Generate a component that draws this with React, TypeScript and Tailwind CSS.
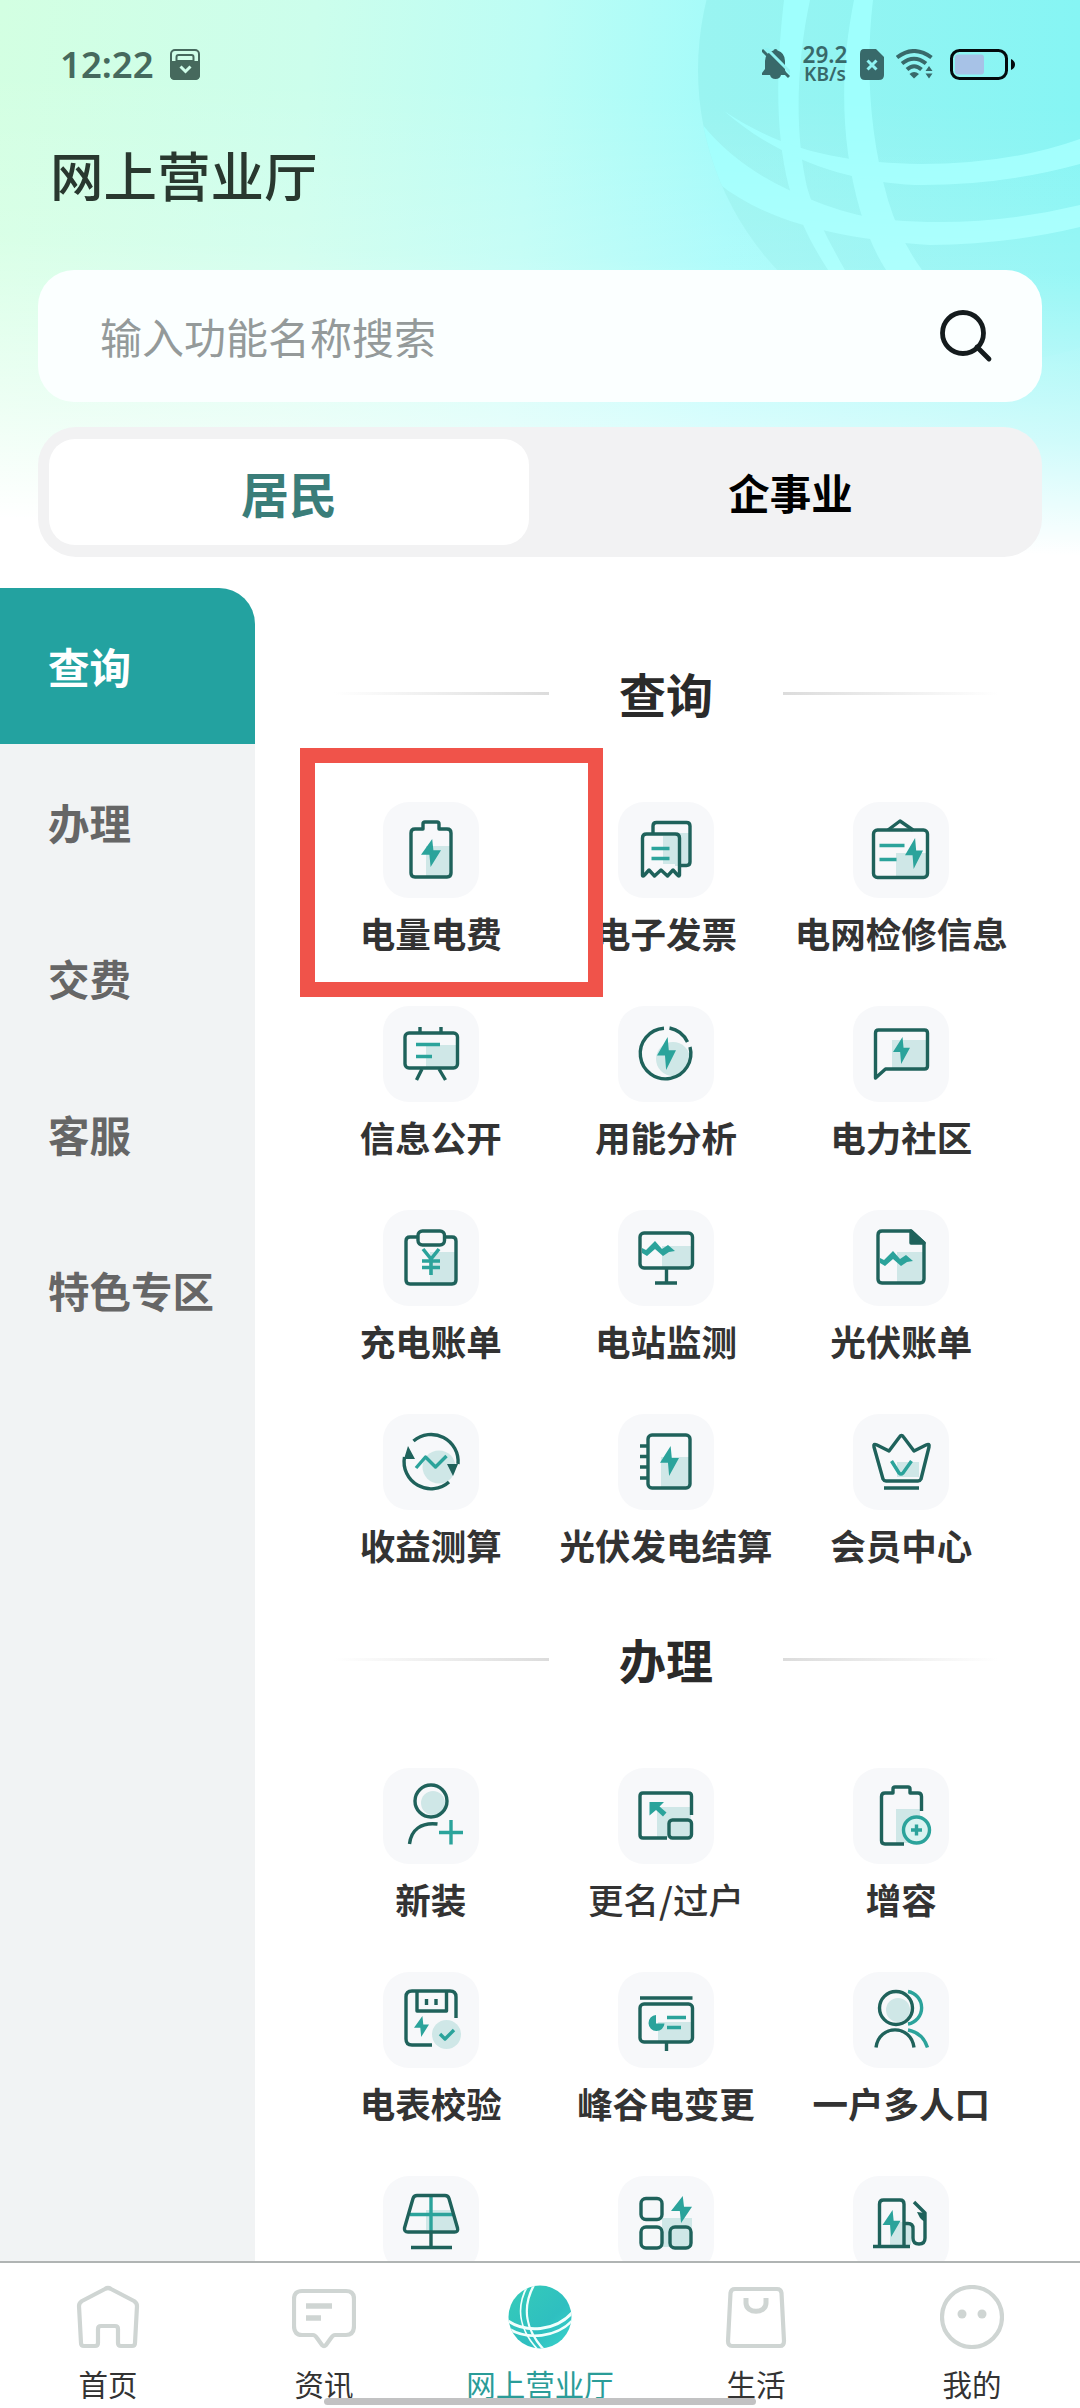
import type { ReactNode } from "react";

const DARK = "#1f625b";
const TEAL = "#2ba39b";
const PALE = "#cfe7e7";

function Bolt({ x, y, w, h }: { x: number; y: number; w: number; h: number }) {
  return (
    <path
      transform={`translate(${x} ${y}) scale(${w} ${h})`}
      d="M.56 0L0 .56H.42L.48 1L1 .4H.62Z"
      fill={TEAL}
      stroke="none"
    />
  );
}

const wave = "M0 7l4 2 9-9 7 8 6-4 7 6-6 1-6 4-8-7-8 7-5-3z";

const queryItems: { label?: string; icon: ReactNode; light?: boolean }[] = [
  {
    label: "电量电费",
    icon: (
      <>
        <path d="M43 44h25v31H43z" fill={PALE} stroke="none" />
        <path d="M32 27h8v-5q0-2 2-2h12q2 0 2 2v5h8q4 0 4 4v40q0 4-4 4H32q-4 0-4-4V31q0-4 4-4z" />
        <Bolt x={38} y={37} w={20} h={28} />
      </>
    ),
  },
  {
    label: "电子发票",
    icon: (
      <>
        <path d="M57 31h15v33H57zM45 34h16v28H45z" fill={PALE} stroke="none" />
        <path d="M35 32v-8q0-3.500 3.500-3.500h30q3.500 0 3.500 3.500v36q0 3.500-3.500 3.500H61" />
        <path d="M24.500 73V36q0-4 4-4h29q4 0 4 4v37q-.5 2-2 0l-4.500-5-5.500 6-6.500-6-6.500 6-5.500-6-4.500 5q-2 2-2 0z" />
        <path d="M33.500 46.500h18M33.500 56.500h18" stroke={TEAL} />
      </>
    ),
  },
  {
    label: "电网检修信息",
    icon: (
      <>
        <path d="M43 51h32v24H43z" fill={PALE} stroke="none" />
        <rect x="20.500" y="28" width="54" height="47.500" rx="4" />
        <path d="M35 28l12-9 13 9" />
        <path d="M26.500 43.500h25M26.500 57.500h17" stroke={TEAL} />
        <Bolt x={52} y={36} w={18} h={31} />
      </>
    ),
  },
  {
    label: "信息公开",
    icon: (
      <>
        <path d="M43 39h31v23H43z" fill={PALE} stroke="none" />
        <rect x="22" y="27" width="52.500" height="35" rx="4" />
        <path d="M37 21v6M58 21v6M39 63l-5.500 11M56 63l6.500 11" />
        <path d="M33 38.500h24M33 50.500h16" stroke={TEAL} />
      </>
    ),
  },
  {
    label: "用能分析",
    icon: (
      <>
        <circle cx="55" cy="53" r="17" fill={PALE} stroke="none" />
        <path d="M51.500 22A25.300 25.300 0 0 1 69.500 36M72 41A25.300 25.300 0 1 1 46 22.300" />
        <Bolt x={39} y={31} w={19} h={33} />
      </>
    ),
  },
  {
    label: "电力社区",
    icon: (
      <>
        <path d="M39 34h34v28H39z" fill={PALE} stroke="none" />
        <path d="M22.500 72V27q0-3 3-3h46q3 0 3 3v33q0 3-3 3H32.500z" />
        <Bolt x={40} y={31} w={17} h={27} />
      </>
    ),
  },
  {
    label: "充电账单",
    icon: (
      <>
        <path d="M47 42h25v31H47z" fill={PALE} stroke="none" />
        <path d="M35 27h-8q-4 0-4 4v39q0 4 4 4h42q4 0 4-4V31q0-4-4-4h-8" />
        <rect x="35" y="21" width="26.500" height="14" rx="4.500" />
        <path d="M40 39l8 10 8-10M48 49v16M39 51h18M39 57.500h18" stroke={TEAL} strokeWidth="3.600" />
      </>
    ),
  },
  {
    label: "电站监测",
    icon: (
      <>
        <path d="M44 36h30v21H44z" fill={PALE} stroke="none" />
        <rect x="22" y="23" width="52.500" height="35" rx="4" />
        <path d="M48.500 58v15M37 73h22" />
        <path d={wave} transform="translate(24 31)" fill={TEAL} stroke="none" />
      </>
    ),
  },
  {
    label: "光伏账单",
    icon: (
      <>
        <path d="M44 42h26v31H44z" fill={PALE} stroke="none" />
        <path d="M58 21H29q-4 0-4 4v44q0 4 4 4h38q4 0 4-4V33z" />
        <path d="M58 21v12h13z" fill={DARK} />
        <path d={wave} transform="translate(27 41)" fill={TEAL} stroke="none" />
      </>
    ),
  },
  {
    label: "收益测算",
    icon: (
      <>
        <circle cx="56" cy="53" r="16.500" fill={PALE} stroke="none" />
        <path d="M30.500 27A27 27 0 0 1 75 50M21.500 43A27 27 0 0 0 66 68" />
        <path d="M25 32l-4 13h11zM64 50h11l-5 12z" fill={DARK} stroke="none" />
        <path d="M33 54l9.500-11 10 10 11-11" stroke={TEAL} />
      </>
    ),
  },
  {
    label: "光伏发电结算",
    icon: (
      <>
        <path d="M43 43h28v30H43z" fill={PALE} stroke="none" />
        <rect x="30" y="21" width="42" height="53" rx="4" />
        <path d="M22 32h8M22 42.500h8M22 53h8M22 64h8" />
        <Bolt x={42} y={32} w={19} h={30} />
      </>
    ),
  },
  {
    label: "会员中心",
    icon: (
      <>
        <path d="M44 48h22v15H44z" fill={PALE} stroke="none" />
        <path d="M21 33q-1-4 3-2l12 6 10.500-14q2-3 4 0L61 37l12-6q4-2 3 2l-8 32q-1 2-3 2H33q-2 0-3-2z" />
        <path d="M31 74h35" />
        <path d="M38.500 47l7.500 12q2 2 4 0l8.500-12" stroke={TEAL} />
      </>
    ),
  },
];

const handleItems: typeof queryItems = [
  {
    label: "新装",
    icon: (
      <>
        <circle cx="50" cy="35" r="12" fill={PALE} stroke="none" />
        <circle cx="48" cy="33" r="16" />
        <path d="M26.500 76C28 62 38 54 54.500 56" />
        <path d="M68 52v24.500M56 64.500h24" stroke={TEAL} />
      </>
    ),
  },
  {
    label: "更名/过户",
    light: true,
    icon: (
      <>
        <path d="M39 39h34v31H39z" fill={PALE} stroke="none" />
        <path d="M73.500 47V28q0-3-3-3H25q-3 0-3 3v39q0 3 3 3h24" />
        <rect x="51" y="52" width="22.500" height="18" rx="3.500" fill={PALE} />
        <path d="M31.500 34H46l-4.500 4.500 7 6-3.500 4-7-6.500-6.500 5.500z" fill={TEAL} stroke="none" />
      </>
    ),
  },
  {
    label: "增容",
    icon: (
      <>
        <path d="M43 41h24v34H43z" fill={PALE} stroke="none" />
        <path d="M51 76H32q-3.500 0-3.500-3.500v-44q0-3.500 3.500-3.500h8v-4q0-2 2-2h13q2 0 2 2v4h8q3.500 0 3.500 3.500V43" />
        <circle cx="63.500" cy="62" r="13" fill="#d9f3f1" stroke={TEAL} />
        <path d="M63.500 56.500v11M58 62h11" stroke={TEAL} />
      </>
    ),
  },
  {
    label: "电表校验",
    icon: (
      <>
        <path d="M73 46V25q0-6-6-6H29q-6 0-6 6v42q0 6 6 6h20" />
        <path d="M34 20v19h29.500V20M43.500 27v6M53 27v6" />
        <Bolt x={31} y={44} w={15} h={21} />
        <circle cx="63.500" cy="62.500" r="14.500" fill={PALE} stroke="none" />
        <path d="M57 62l5 5 9-9" stroke={TEAL} />
      </>
    ),
  },
  {
    label: "峰谷电变更",
    icon: (
      <>
        <path d="M40 50h34v20H40z" fill={PALE} stroke="none" />
        <path d="M22 26h52.500M48.500 70v9" />
        <rect x="22" y="32" width="52.500" height="38" rx="4" />
        <path d="M38 43a8 8 0 1 0 8.500 8.500H38z" fill={TEAL} stroke="none" />
        <path d="M49 45.500h19M49 55.500h14" stroke={TEAL} />
      </>
    ),
  },
  {
    label: "一户多人口",
    icon: (
      <>
        <circle cx="45" cy="38" r="12" fill={PALE} stroke="none" />
        <path d="M55 19.500a16.500 16.500 0 0 1 0 32.500M55 58q15 3 19.500 17.500" stroke={TEAL} />
        <circle cx="43" cy="36" r="16.500" />
        <path d="M23 75.500C26 52 58 52 61 75.500" />
      </>
    ),
  },
  {
    icon: (
      <>
        <path d="M43 34h26l5 20H43z" fill={PALE} stroke="none" />
        <path d="M48 20v36M27 38.500h43" stroke={TEAL} />
        <path d="M34 19.500h28q3 0 4 3L74.500 52q1 4-3 4H25q-4 0-3.500-4L30 22.500q1-3 4-3zM48 56v15M28 71.500h41" />
      </>
    ),
  },
  {
    icon: (
      <>
        <path d="M44 42h30v29H44z" fill={PALE} stroke="none" />
        <rect x="23" y="22.500" width="21" height="21" rx="5" fill="#f6f8f9" />
        <rect x="23" y="51" width="21" height="21" rx="5" fill="#f6f8f9" />
        <rect x="52" y="51" width="21" height="21" rx="5" />
        <Bolt x={53} y={20} w={21} h={27} />
      </>
    ),
  },
  {
    icon: (
      <>
        <path d="M37 46h21v23H37z" fill={PALE} stroke="none" />
        <path d="M26.500 70V28q0-4 4-4H47q4 0 4 4v42M20 70.500h37M51 47.500h4q5 0 5 5V62q0 6 6 6t6-6V37L61 26" />
        <path d="M64 36l8 1v9q-5-3-6-6z" fill={DARK} stroke="none" />
        <Bolt x={29.5} y={34} w={18} h={27} />
      </>
    ),
  },
];

const categories = ["查询", "办理", "交费", "客服", "特色专区"];

const navItems = [
  {
    label: "首页",
    icon: (
      <path d="M29 4q3-2 6 0l23 12q3 2 3 5l-2 37q0 3-3 3H45q-3 0-3-3V44q0-3-3-3H25q-3 0-3 3v14q0 3-3 3H8q-3 0-3-3L3 21q0-3 3-5z" />
    ),
  },
  {
    label: "资讯",
    icon: (
      <>
        <path d="M10 6h44q8 0 8 8v27q0 9-8 9H43q-2 0-4 3l-5 7q-2 2-4 0l-5-7q-2-3-4-3H10q-8 0-8-9V14q0-8 8-8z" />
        <path d="M14 21h26M14 33h15" strokeWidth="5.500" strokeLinecap="butt" />
      </>
    ),
  },
  {
    label: "网上营业厅",
    active: true,
    icon: (
      <>
        <defs>
          <linearGradient id="globe" x1="0" y1="0" x2="1" y2="1">
            <stop offset="0" stopColor="#35ccb9" />
            <stop offset="0.600" stopColor="#2fbfc0" />
            <stop offset="1" stopColor="#39d3cb" />
          </linearGradient>
          <clipPath id="globeClip">
            <circle cx="32" cy="32" r="31.500" />
          </clipPath>
        </defs>
        <circle cx="32" cy="32" r="31.500" fill="url(#globe)" stroke="none" />
        <g clipPath="url(#globeClip)" stroke="#f1fffd">
          <path d="M20 0C8 21 10 44 31 66" strokeWidth="1.800" />
          <path d="M26 0C14 22 17 45 37 66" strokeWidth="2.400" />
          <path d="M0 36C18 48 47 47 65 27" strokeWidth="3" />
          <path d="M1 44C20 55 48 53 65 35" strokeWidth="2.600" />
        </g>
      </>
    ),
  },
  {
    label: "生活",
    icon: (
      <>
        <path d="M11 4h42q4 0 4.500 4L60 56q0 5-4 5H8q-4 0-4-5L6.500 8Q7 4 11 4z" />
        <path d="M22 13v5c0 11 20 11 20 0v-5" strokeWidth="5" />
      </>
    ),
  },
  {
    label: "我的",
    icon: (
      <>
        <circle cx="32" cy="32" r="30" />
        <circle cx="22" cy="29" r="4.500" fill="#cfd5d3" stroke="none" />
        <circle cx="42" cy="29" r="4.500" fill="#cfd5d3" stroke="none" />
      </>
    ),
  },
];

function HeaderBackdrop() {
  return (
    <div className="absolute inset-x-0 top-0 h-[560px] bg-[linear-gradient(95deg,#d3ffe2_0%,#ccfeec_28%,#bcfdf5_48%,#a2fbfa_66%,#88f5f4_100%)]">
      <svg className="absolute inset-0" width="1080" height="560" viewBox="0 0 1080 560" fill="none">
        <defs>
          <clipPath id="ball">
            <circle cx="990" cy="70" r="292" />
          </clipPath>
          <linearGradient id="ballFill" x1="698" x2="1080" y1="0" y2="0" gradientUnits="userSpaceOnUse">
            <stop offset="0" stopColor="#9af4f1" />
            <stop offset="1" stopColor="#86f5f4" />
          </linearGradient>
        </defs>
        <circle cx="990" cy="70" r="292" fill="url(#ballFill)" />
        <g clipPath="url(#ball)" fill="#9ffffd">
          <path d="M784 0C777 60 774 130 789 187C798 218 812 245 828 270L845 270C828 240 815 215 807 187C794 130 797 60 810 0Z" />
          <path d="M854 0C840 70 840 140 860 210Q870 245 886 270L922 270Q900 240 888 200C868 130 866 60 873 0Z" />
          <path d="M724 111C790 155 850 162 920 164Q1010 164 1080 139V164Q1000 186 915 185C850 182 780 160 724 111Z" />
          <path d="M680 98L702 124Q735 165 789 190C840 213 870 222 940 222Q1010 222 1080 205V227Q1010 244 930 245C850 240 770 225 718 183L690 183Z" />
        </g>
      </svg>
      <div className="absolute inset-0 bg-[linear-gradient(182deg,rgba(255,255,255,0)_18%,rgba(255,255,255,0.150)_46%,rgba(255,255,255,0.600)_74%,#fff_93%)]" />
    </div>
  );
}

function StatusBar() {
  return (
    <div className="flex h-[128px] items-center justify-between pr-[65px] pl-[60px] text-[#46695d]">
      <div className="flex items-center gap-[15px]">
        <span className="w-[95px] font-['Noto_Sans',sans-serif] text-[36.5px] leading-none font-semibold">
          12:22
        </span>
        <svg width="30" height="31" viewBox="0 0 30 31" fill="none">
          <rect x="1" y="1" width="28" height="29" rx="4" stroke="currentColor" strokeWidth="2" />
          <path d="M6.500 12V8q0-2 2-2h13q2 0 2 2v4" stroke="currentColor" strokeWidth="2" />
          <path d="M0 12h7v-1h16v1h7v14q0 5-5 5H5q-5 0-5-5z" fill="currentColor" />
          <path d="M10.500 17.500l5 5 5-5" stroke="#cffde9" strokeWidth="3" />
        </svg>
      </div>
      <div className="flex items-center text-[#38696a]">
        <svg width="28" height="32" viewBox="0 0 28 32">
          <path
            d="M13.500 1q-2 0-2 1.500Q3 5 3 13v8l-3 4v2h8q1 4 5.500 4t5.500-4h5v-2l-1-3v-9Q23 5 15.500 2.500 15.500 1 13.500 1z"
            fill="currentColor"
          />
          <path d="M3 -1l26 26" stroke="#8ff3f2" strokeWidth="3" />
          <path d="M0 2l27 27" stroke="currentColor" strokeWidth="3" />
        </svg>
        <div className="ml-[12px] flex w-[46px] flex-col items-center font-['Noto_Sans',sans-serif] font-semibold">
          <span className="h-[20px] text-[22.5px] leading-[20px]">29.2</span>
          <span className="h-[19px] text-[19px] leading-[19px]">KB/s</span>
        </div>
        <svg className="ml-[12px]" width="25" height="31" viewBox="0 0 25 31">
          <path d="M4 0h12l8 8v18q0 5-5 5H5q-5 0-5-5V5q0-5 4-5z" fill="currentColor" />
          <path d="M7.500 11.500l9 9M16.500 11.500l-9 9" stroke="#8ff3f2" strokeWidth="3" />
        </svg>
        <svg className="ml-[11px]" width="38" height="30" viewBox="0 0 38 30" fill="none" stroke="currentColor" strokeWidth="4">
          <path d="M1 8.500Q18 -4.500 35.500 8.500M6 14.500Q18 5 30 14.500M11 20.500Q18 14 25.500 20.500" />
          <path d="M13.500 25q4.500-4 9.500 0L18 29.500z" fill="currentColor" stroke="none" />
          <path d="M33 17l3.500 5h-7zM33 29.500l3.500-5h-7z" fill="currentColor" stroke="none" />
        </svg>
        <svg className="ml-[16px]" width="65" height="31" viewBox="0 0 65 31">
          <rect x="1.500" y="1.500" width="55" height="28" rx="8" fill="none" stroke="#030a0d" strokeWidth="3" />
          <rect x="5" y="5.500" width="29" height="20" rx="3" fill="#a7c2e7" />
          <path d="M61 10q4 2 4 5.500T61 21z" fill="#030a0d" />
        </svg>
      </div>
    </div>
  );
}

function Section({ title, items }: { title: string; items: typeof queryItems }) {
  return (
    <section className="ml-[58px] w-[706px]">
      <div className="mb-[80px] flex h-[58px] items-center justify-between px-[21px]">
        <div className="h-[3px] w-[215px] bg-gradient-to-r from-white to-[#dcdcdc]" />
        <h2 className="text-[47px] leading-[58px] font-bold text-[#2a2a2a]">{title}</h2>
        <div className="h-[3px] w-[215px] bg-gradient-to-r from-[#dcdcdc] to-white" />
      </div>
      <div className="grid grid-cols-3">
        {items.map((item, i) => (
          <div key={i} className="flex h-[204px] flex-col items-center">
            <div className="rounded-[26px] bg-[#f7f8fa]">
              <svg
                width="96"
                height="96"
                viewBox="0 0 96 96"
                fill="none"
                stroke={DARK}
                strokeWidth="3.400"
                strokeLinejoin="round"
              >
                {item.icon}
              </svg>
            </div>
            {item.label && (
              <span
                className={`mt-[15px] text-[35.5px] leading-[40px] whitespace-nowrap text-[#333] ${
                  item.light ? "font-medium" : "font-bold"
                }`}
              >
                {item.label}
              </span>
            )}
          </div>
        ))}
      </div>
    </section>
  );
}

export default function App() {
  return (
    <div className="relative flex h-[2408px] w-[1080px] flex-col overflow-hidden bg-white font-['Noto_Sans_CJK_SC',sans-serif]">
      <HeaderBackdrop />

      <header className="relative shrink-0">
        <StatusBar />
        <h1 className="ml-[50px] h-[92px] text-[53.5px] leading-[92px] font-medium text-[#29382f]">
          网上营业厅
        </h1>
        <div className="mx-[38px] mt-[50px] flex h-[132px] items-center justify-between rounded-[36px] bg-[#fbffff] pr-[48px] pl-[62px]">
          <span className="text-[42px] leading-none text-[#949a9a]">输入功能名称搜索</span>
          <svg width="54" height="54" viewBox="0 0 54 54" fill="none" stroke="#141b1d" strokeWidth="4.800">
            <circle cx="23" cy="24" r="20.500" />
            <path d="M37 38l12 12" strokeLinecap="round" />
          </svg>
        </div>
        <div className="mx-[38px] mt-[25px] flex h-[130px] rounded-[38px] bg-[#f2f2f3] py-[12px] pl-[11px]">
          <button className="w-[480px] rounded-[26px] bg-white text-[48px] font-bold text-[#3a7d79]">
            居民
          </button>
          <button className="flex-1 pl-[10px] text-[41.5px] font-bold text-black">企事业</button>
        </div>
      </header>

      <div className="relative mt-[31px] flex h-[1673px] shrink-0 overflow-hidden">
        <aside className="w-[255px] shrink-0 bg-[#f1f3f4] [clip-path:inset(0_round_0_36px_0_0)]">
          {categories.map((name, i) => (
            <div
              key={name}
              className={`flex h-[156px] items-center pl-[48px] text-[41.5px] font-bold ${
                i === 0 ? "bg-[#23a2a0] text-white" : "text-[#666]"
              }`}
            >
              {name}
            </div>
          ))}
        </aside>
        <main className="relative flex-1 pt-[76px]">
          <Section title="查询" items={queryItems} />
          <div className="h-[12px]" />
          <Section title="办理" items={handleItems} />
          <div className="absolute top-[160px] left-[45px] h-[249px] w-[303px] border-[15px] border-[#f0534a]" />
        </main>
      </div>

      <nav className="relative flex h-[147px] shrink-0 border-t-2 border-[#b0b4b4] bg-white">
        {navItems.map((item) => (
          <div key={item.label} className="flex flex-1 flex-col items-center pt-[22px]">
            <svg
              width="64"
              height="64"
              viewBox="0 0 64 64"
              fill="none"
              stroke="#cfd5d3"
              strokeWidth="4.200"
              strokeLinejoin="round"
            >
              {item.icon}
            </svg>
            <span
              className={`mt-[14px] text-[29.5px] leading-[40px] ${
                item.active ? "text-[#2a9c98]" : "text-[#333]"
              }`}
            >
              {item.label}
            </span>
          </div>
        ))}
        <div className="absolute bottom-[3px] left-[324px] h-[7px] w-[432px] rounded-full bg-[#c2c2c3]" />
      </nav>
    </div>
  );
}
